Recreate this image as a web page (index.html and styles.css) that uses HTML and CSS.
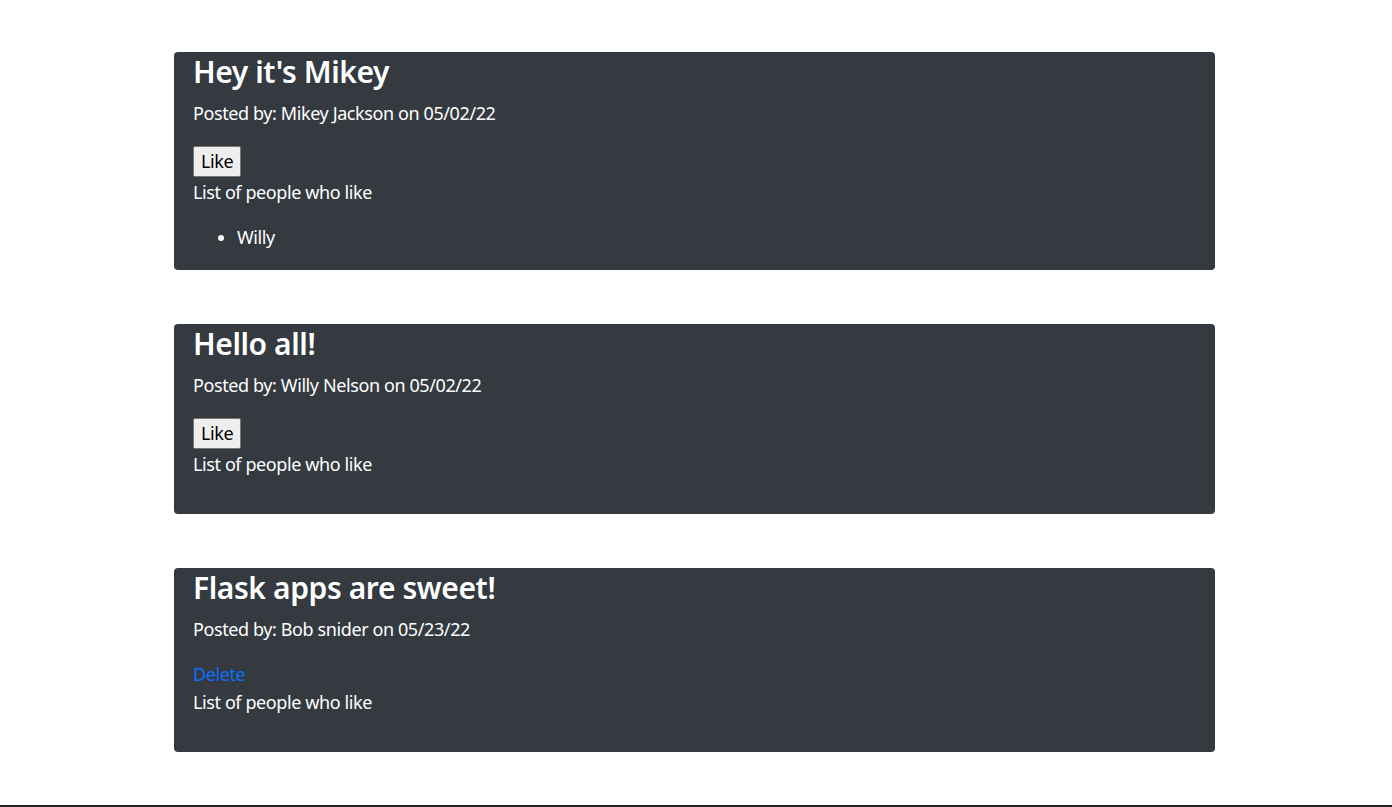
FILE: index.html
```html
<!DOCTYPE html>
<html lang="en">
<head>
<meta charset="utf-8">
<title>Posts</title>
<link rel="stylesheet" href="styles.css">
</head>
<body>
<main class="posts">
  <article class="post">
    <h2 class="post-title">Hey it's Mikey</h2>
    <p class="post-meta">Posted by: Mikey Jackson on 05/02/22</p>
    <form class="post-action like-form"><button type="button" class="like-btn">Like</button></form>
    <p class="likes-label">List of people who like</p>
    <ul class="likes-list"><li>Willy</li></ul>
  </article>
  <article class="post">
    <h2 class="post-title">Hello all!</h2>
    <p class="post-meta">Posted by: Willy Nelson on 05/02/22</p>
    <form class="post-action like-form"><button type="button" class="like-btn">Like</button></form>
    <p class="likes-label">List of people who like</p>
    <ul class="likes-list"></ul>
  </article>
  <article class="post">
    <h2 class="post-title">Flask apps are sweet!</h2>
    <p class="post-meta">Posted by: Bob snider on 05/23/22</p>
    <div class="post-action delete-row"><a class="delete-link" href="#">Delete</a></div>
    <p class="likes-label">List of people who like</p>
    <ul class="likes-list"></ul>
  </article>
</main>
<footer class="page-footer"></footer>
</body>
</html>
```
FILE: styles.css
```css
html, body {
  margin: 0;
  padding: 0;
}
body {
  font-family: "Noto Sans", "Open Sans", sans-serif;
  font-size: 18px;
  line-height: 1.5;
  letter-spacing: -0.4px;
  color: #fff;
  background: #fff;
  height: 807px;
  display: flex;
  flex-direction: column;
  overflow: hidden;
}
.posts {
  display: flex;
  flex-direction: column;
  gap: 54px;
  padding: 52px 0 0 174px;
  flex: 1;
}
.post {
  width: 1041px;
  box-sizing: border-box;
  background: #343a40;
  border-radius: 4px;
  padding: 1px 19px 0;
  display: flex;
  flex-direction: column;
  align-items: flex-start;
}
.post-title {
  margin: 0 0 9px;
  font-size: 30px;
  font-weight: 600;
  line-height: 38px;
  letter-spacing: -0.4px;
}
.post-meta {
  margin: 0 0 18px;
}
.post-action {
  margin: 0;
}
.like-form {
  padding: 1px 0 2px;
}
.delete-row {
  padding-bottom: 1px;
}
.like-btn {
  display: block;
  font-family: inherit;
  font-size: 18px;
  letter-spacing: -0.4px;
  line-height: 27px;
  height: 31px;
  box-sizing: border-box;
  padding: 1px 7px;
  margin: 0;
  color: #000;
  background: #efefef;
  border: 1px solid #767676;
  border-radius: 2px;
}
.delete-link {
  color: #0d6efd;
  text-decoration: none;
}
.likes-label {
  margin: 0 0 18px;
}
.likes-list {
  margin: 0 0 18px;
  padding-left: 44px;
}
.likes-list li {
  padding-bottom: 1px;
}
.page-footer {
  height: 2px;
  background: #222;
}
```
